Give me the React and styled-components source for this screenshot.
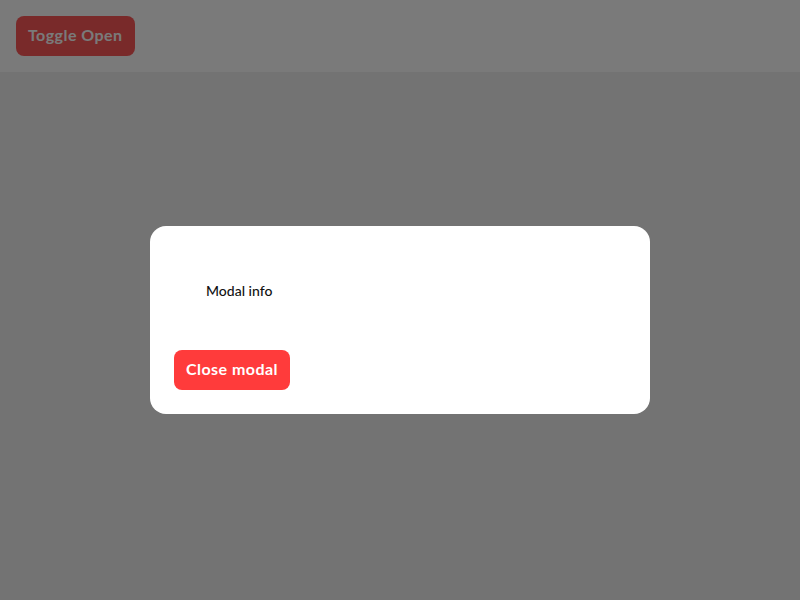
import React from "react";
import styled, { createGlobalStyle } from "styled-components";

const Global = createGlobalStyle`
  html, body { margin: 0; padding: 0; }
  body {
    background: #e6e6e6;
    font-family: "Lato", "Noto Sans", sans-serif;
  }
  * { box-sizing: border-box; }
`;

const Page = styled.div`
  width: 800px;
  height: 600px;
  background: #e6e6e6;
`;

const Header = styled.header`
  height: 72px;
  padding: 16px;
  background: #f4f4f4;
`;

const Button = styled.button`
  height: 40px;
  padding: 0 12px 3px;
  border: none;
  border-radius: 8px;
  background: ${(p) => (p.$muted ? "#f25454" : "#ff3b3b")};
  color: ${(p) => (p.$muted ? "#f4f4f4" : "#ffffff")};
  font-family: "Lato", "Noto Sans", sans-serif;
  font-weight: 700;
  font-size: 16px;
  line-height: 16px;
  letter-spacing: 0.45px;
  cursor: pointer;
`;

const Overlay = styled.div`
  position: fixed;
  inset: 0;
  background: rgba(0, 0, 0, 0.5);
  display: flex;
  justify-content: center;
  align-items: center;
  padding-top: 40px;
`;

const Modal = styled.div`
  width: 500px;
  background: #fff;
  border-radius: 16px;
  padding: 24px;
  display: flex;
  flex-direction: column;
  align-items: flex-start;
  gap: 18px;
`;

const Info = styled.div`
  padding: 32px;
  font-size: 14px;
  line-height: 18px;
  font-weight: 500;
  color: #111;
`;

export default function App() {
  return (
    <>
      <Global />
      <Page>
        <Header>
          <Button $muted>Toggle Open</Button>
        </Header>
      </Page>
      <Overlay>
        <Modal>
          <Info>Modal info</Info>
          <Button>Close modal</Button>
        </Modal>
      </Overlay>
    </>
  );
}
